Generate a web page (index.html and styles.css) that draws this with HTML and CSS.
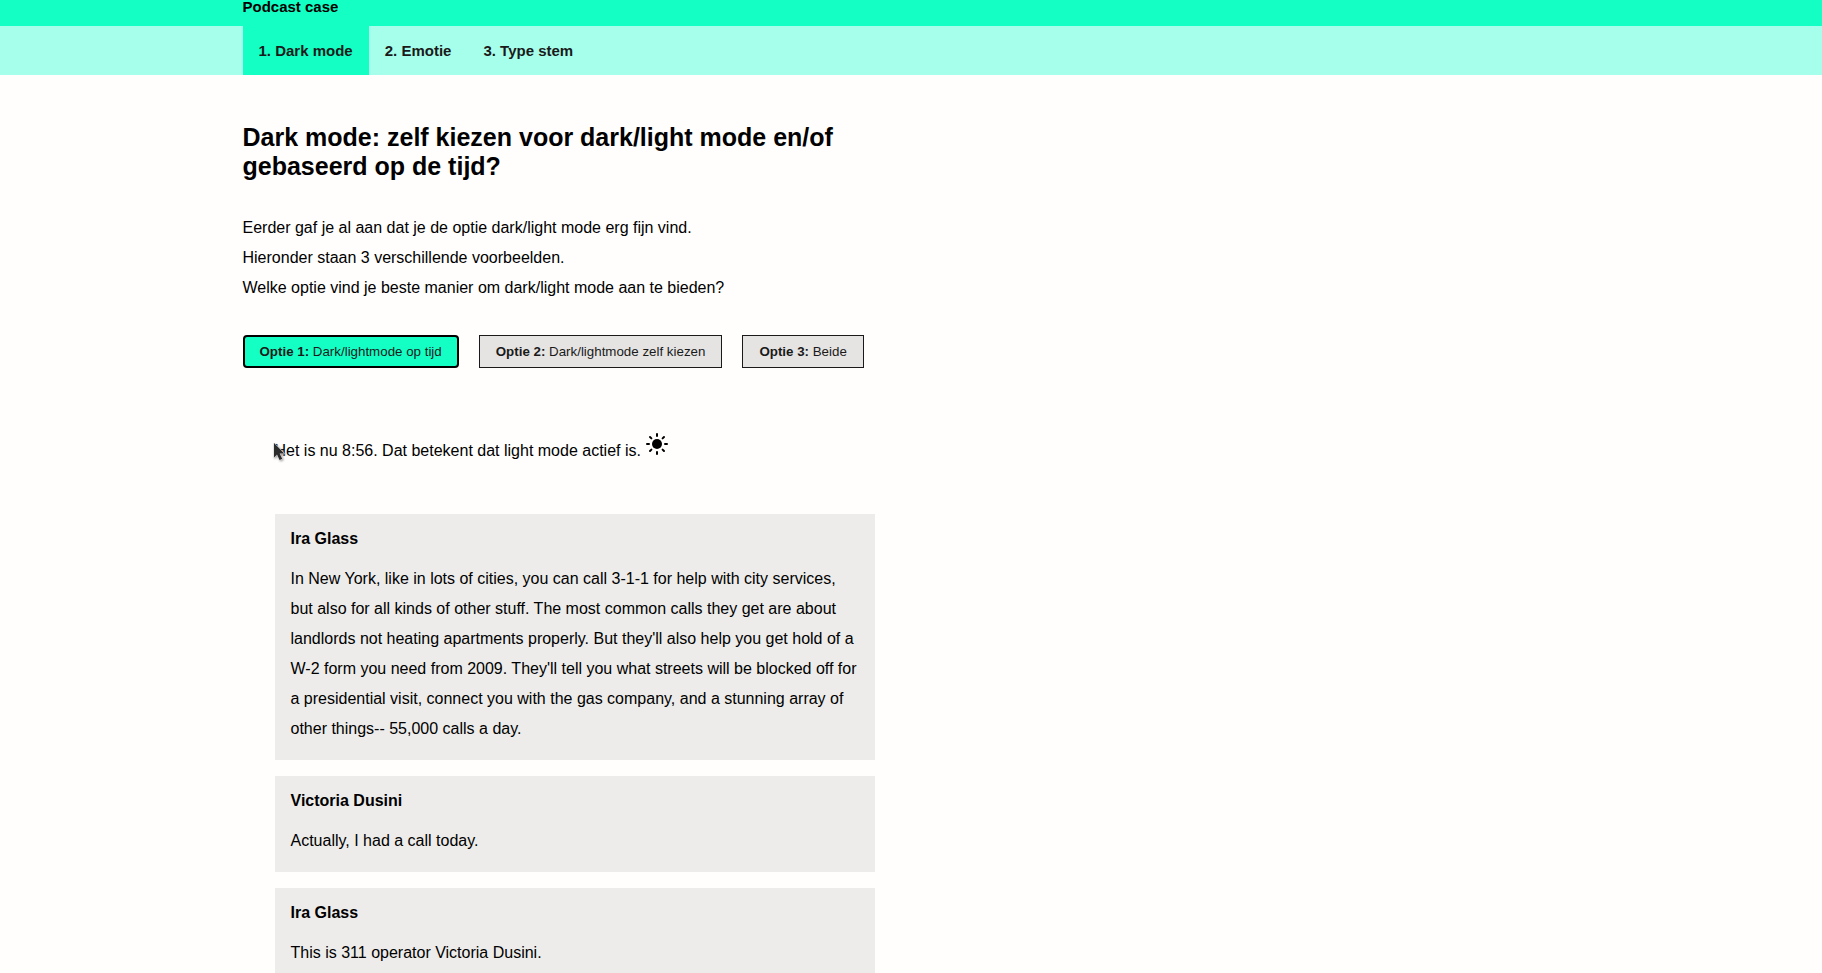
FILE: index.html
```html
<!DOCTYPE html>
<html lang="nl">
<head>
<meta charset="utf-8">
<meta name="viewport" content="width=device-width, initial-scale=1">
<title>Podcast case</title>
<link rel="stylesheet" href="styles.css">
</head>
<body>
<header class="site-header">
  <div class="container site-title">Podcast case</div>
</header>
<nav class="site-nav">
  <div class="container tabs">
    <a class="tab tab-active" href="#dark-mode">1. Dark mode</a>
    <a class="tab" href="#emotie">2. Emotie</a>
    <a class="tab" href="#type-stem">3. Type stem</a>
  </div>
</nav>
<main class="container content">
  <h1 class="heading">Dark mode: zelf kiezen voor dark/light mode en/of gebaseerd op de tijd?</h1>
  <div class="intro">
    <p>Eerder gaf je al aan dat je de optie dark/light mode erg fijn vind.</p>
    <p>Hieronder staan 3 verschillende voorbeelden.</p>
    <p>Welke optie vind je beste manier om dark/light mode aan te bieden?</p>
  </div>
  <div class="options">
    <button class="option option-active" type="button"><b>Optie 1:</b> Dark/lightmode op tijd</button>
    <button class="option" type="button"><b>Optie 2:</b> Dark/lightmode zelf kiezen</button>
    <button class="option" type="button"><b>Optie 3:</b> Beide</button>
  </div>
  <section class="example">
    <p class="status">Het is nu 8:56. Dat betekent dat light mode actief is.
      <svg class="sun" viewBox="0 0 24 24" aria-hidden="true">
        <circle cx="12" cy="12" r="5"/>
        <path d="M12 2v2M12 20v2M2 12h2M20 12h2M5 5l1.4 1.4M17.6 17.6l1.4 1.4M5 19l1.4-1.4M17.6 6.4l1.4-1.4"/>
      </svg>
      <svg class="pointer" viewBox="0 0 12 19" aria-hidden="true">
        <path d="M1 1v14.5l3-3 2.6 5.5 2.6-1.2-2.6-5.3h4.6z"/>
      </svg>
    </p>
    <div class="transcript">
      <article class="card">
        <h2 class="speaker">Ira Glass</h2>
        <p>In New York, like in lots of cities, you can call 3-1-1 for help with city services, but also for all kinds of other stuff. The most common calls they get are about landlords not heating apartments properly. But they'll also help you get hold of a W-2 form you need from 2009. They'll tell you what streets will be blocked off for a presidential visit, connect you with the gas company, and a stunning array of other things-- 55,000 calls a day.</p>
      </article>
      <article class="card">
        <h2 class="speaker">Victoria Dusini</h2>
        <p>Actually, I had a call today.</p>
      </article>
      <article class="card">
        <h2 class="speaker">Ira Glass</h2>
        <p>This is 311 operator Victoria Dusini.</p>
      </article>
    </div>
  </section>
</main>
</body>
</html>
```
FILE: styles.css
```css
* {
  box-sizing: border-box;
}

body {
  margin: 0;
  background: #fffefd;
  color: #000;
  font-family: "Liberation Sans", Arial, sans-serif;
  font-size: 16px;
  line-height: 30px;
}

h1,
h2,
p {
  margin: 0;
}

.container {
  max-width: 1337px;
  margin: 0 auto;
}

.site-header {
  padding-bottom: 12px;
  background: #14ffc4;
}

.site-title {
  font-size: 15px;
  font-weight: bold;
  line-height: 14px;
}

.site-nav {
  background: #a6ffea;
}

.tabs {
  display: flex;
}

.tab {
  padding: 16px;
  color: #1a1a1a;
  font-size: 15px;
  font-weight: bold;
  line-height: 17px;
  text-decoration: none;
}

.tab-active {
  background: #14ffc4;
}

.content {
  padding: 48px 0;
}

.heading {
  max-width: 632px;
  margin-bottom: 32px;
  font-size: 25px;
  line-height: 29px;
}

.options {
  display: flex;
  flex-wrap: wrap;
  gap: 20px;
  margin: 32px 0 64px;
}

.option {
  padding: 8px 16px;
  border: 1px solid #1a1a1a;
  background: #e5e4e2;
  color: #1a1a1a;
  font-family: inherit;
}

.option-active {
  padding: 7px 15px;
  border: 2px solid #000;
  border-radius: 4px;
  background: #14ffc4;
}

.example {
  max-width: 632px;
  padding-left: 32px;
}

.status {
  position: relative;
  margin-bottom: 48px;
}

.sun {
  width: 24px;
  height: 24px;
}

.sun circle {
  fill: #000;
}

.sun path {
  fill: none;
  stroke: #000;
  stroke-width: 2;
  stroke-linecap: round;
}

.pointer {
  position: absolute;
  top: 10px;
  left: -2px;
  width: 12px;
  height: 19px;
  fill: #2b2b2b;
  stroke: #ddd;
  stroke-width: 1;
  paint-order: stroke;
  filter: drop-shadow(1px 1px 1px #999);
}

.transcript {
  display: grid;
  gap: 16px;
}

.card {
  padding: 16px;
  background: #edecea;
}

.speaker {
  margin-bottom: 16px;
  font-size: 16px;
  line-height: 18px;
}
```
